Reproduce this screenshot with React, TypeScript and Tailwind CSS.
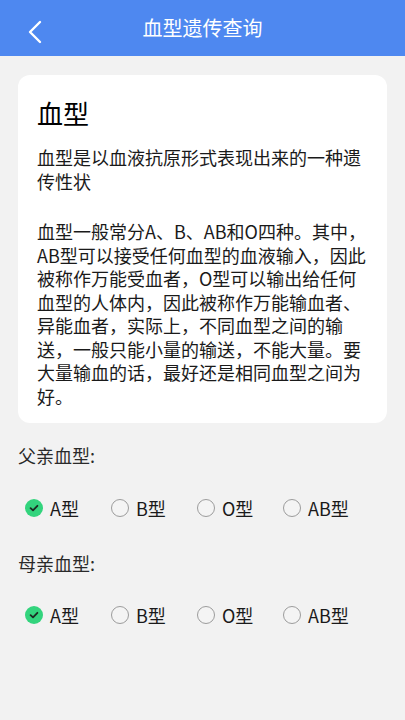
import { useState } from 'react';

const TYPES = ['A型', 'B型', 'O型', 'AB型'];

function Radio({ checked }: { checked: boolean }) {
  if (checked) {
    return (
      <span className="flex h-[18px] w-[18px] items-center justify-center rounded-full bg-[#33d47d]">
        <svg width="10" height="10" viewBox="0 0 10 10" fill="none">
          <path d="M1.6 5.2 L4 7.4 L8.4 2.8" stroke="#1d2a22" strokeWidth="1.8" strokeLinecap="round" strokeLinejoin="round" />
        </svg>
      </span>
    );
  }
  return <span className="h-[18px] w-[18px] rounded-full border border-[#9c9c9c] bg-[#f4f4f4]" />;
}

function BloodGroup({ value, onChange }: { value: string; onChange: (v: string) => void }) {
  return (
    <div className="flex h-[24px] items-center pl-[7px]">
      {TYPES.map((t) => (
        <button
          key={t}
          type="button"
          onClick={() => onChange(t)}
          className="flex w-[86px] items-center gap-[7px] text-left text-[18px] leading-[24px] text-[#1a1a1a]"
        >
          <Radio checked={value === t} />
          <span>{t}</span>
        </button>
      ))}
    </div>
  );
}

export default function App() {
  const [father, setFather] = useState('A型');
  const [mother, setMother] = useState('A型');

  return (
    <div
      className="min-h-[720px] w-[405px] bg-[#f2f2f2]"
      style={{ fontFamily: '"Noto Sans CJK SC", "Noto Sans", sans-serif' }}
    >
      <header className="relative flex h-[56px] items-center justify-center bg-[#4e88f0]">
        <button type="button" className="absolute left-[18px] top-[12px] p-1" aria-label="返回">
          <svg width="24" height="24" viewBox="18 12 24 32" fill="none" className="h-[32px] w-[24px]">
            <path d="M36 18 L26 28 L36 38" stroke="white" strokeWidth="2.4" strokeLinecap="round" strokeLinejoin="round" />
          </svg>
        </button>
        <h1 className="text-[20px] leading-[28px] text-white">血型遗传查询</h1>
      </header>

      <main className="px-[18px] pt-[19px]">
        <section className="rounded-[12px] bg-white px-[19px] pb-[15px] pt-[20px]">
          <h2 className="text-[26px] leading-[36px] text-black">血型</h2>
          <p className="mt-[15px] text-[18px] leading-[23.5px] text-[#1a1a1a]">
            血型是以血液抗原形式表现出来的一种遗传性状
          </p>
          <p className="mt-[27px] text-[18px] leading-[23.5px] text-[#1a1a1a]">
            血型一般常分A、B、AB和O四种。其中，AB型可以接受任何血型的血液输入，因此被称作万能受血者，O型可以输出给任何血型的人体内，因此被称作万能输血者、异能血者，实际上，不同血型之间的输送，一般只能小量的输送，不能大量。要大量输血的话，最好还是相同血型之间为好。
          </p>
        </section>

        <div className="mt-[20px] text-[18px] leading-[24px] text-[#2a2a2a]">父亲血型:</div>
        <div className="mt-[29px]">
          <BloodGroup value={father} onChange={setFather} />
        </div>

        <div className="mt-[31px] text-[18px] leading-[24px] text-[#2a2a2a]">母亲血型:</div>
        <div className="mt-[28px]">
          <BloodGroup value={mother} onChange={setMother} />
        </div>
      </main>
    </div>
  );
}
